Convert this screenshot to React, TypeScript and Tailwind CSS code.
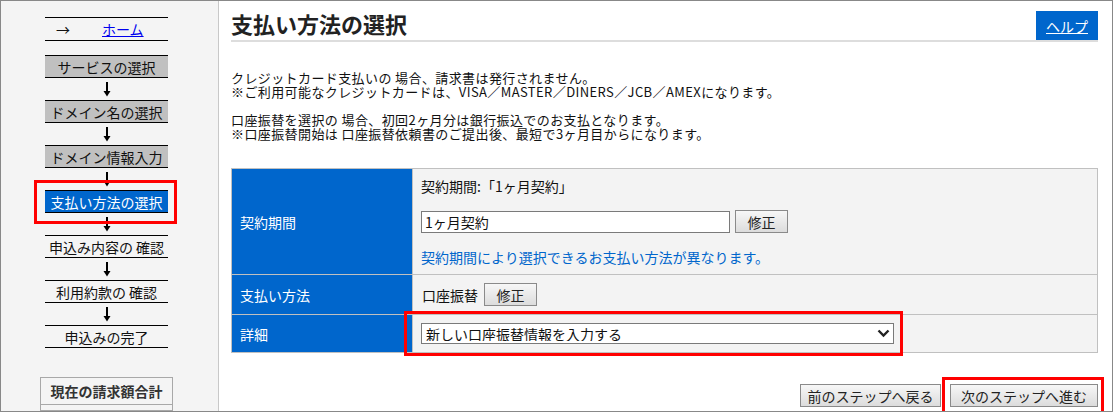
import type { ReactNode } from "react";

type Kind = "done" | "current" | "todo";

const pasos: { label: string; kind: Kind }[] = [
  { label: "サービスの選択", kind: "done" },
  { label: "ドメイン名の選択", kind: "done" },
  { label: "ドメイン情報入力", kind: "done" },
  { label: "支払い方法の選択", kind: "current" },
  { label: "申込み内容の 確認", kind: "todo" },
  { label: "利用約款の 確認", kind: "todo" },
  { label: "申込みの完了", kind: "todo" },
];

// red annotation frame drawn over an element
function Marca({ className }: { className: string }) {
  return (
    <span
      className={`pointer-events-none absolute border-[3px] border-[#ff0000] ${className}`}
    />
  );
}

function Flecha() {
  return (
    <div className="flex h-[22px] items-center justify-center">
      <svg width="8" height="15" viewBox="0 0 8 15">
        <path d="M4 0V10" stroke="#000" strokeWidth="2" />
        <path d="M0.5 9H7.5L4 14.5Z" fill="#000" />
      </svg>
    </div>
  );
}

function Paso({ label, kind }: { label: string; kind: Kind }) {
  const color =
    kind === "done"
      ? "bg-[#c0c0c0] text-[#111]"
      : kind === "current"
        ? "bg-[#0066cc] text-white"
        : "text-[#111]";
  const caja = (
    <div
      className={`flex h-[23px] items-center justify-center border-y border-black text-[14px] leading-none ${color}`}
    >
      {label}
    </div>
  );
  if (kind !== "current") return caja;
  return (
    <div className="relative">
      {caja}
      <Marca className="-top-[10px] -bottom-[11px] -left-[11px] -right-[9px]" />
    </div>
  );
}

function Boton({ children, className = "" }: { children: ReactNode; className?: string }) {
  return (
    <button
      type="button"
      className={`flex h-[23px] items-center justify-center border border-[#8a8a8a] bg-gradient-to-b from-[#f7f7f7] to-[#dcdcdc] text-[14px] leading-none text-[#222] ${className}`}
    >
      {children}
    </button>
  );
}

function Sidebar() {
  return (
    <aside className="flex w-[218px] shrink-0 flex-col border-r border-[#c8c8c8] bg-[#f4f4f4]">
      <div className="ml-[44px] mt-[16px] w-[123px]">
        <div className="flex h-[24px] items-center border-y border-black text-[14px] leading-none">
          <span className="w-[57px] pl-[11px] text-[#111]">→</span>
          <a href="#" className="text-[#0000ee] underline">
            ホーム
          </a>
        </div>
        <div className="mt-[14px]">
          {pasos.map((p, i) => (
            <div key={p.label}>
              {i > 0 && <Flecha />}
              <Paso label={p.label} kind={p.kind} />
            </div>
          ))}
        </div>
      </div>
      <div className="ml-[39px] mt-[29px] h-[60px] w-[133px] border border-[#a8a8a8]">
        <div className="flex h-[27px] items-center justify-center border-b border-[#a8a8a8] text-[14px] font-bold leading-none text-[#333]">
          現在の請求額合計
        </div>
      </div>
    </aside>
  );
}

export default function App() {
  return (
    <div className="flex h-[412px] w-[1113px] overflow-hidden border border-[#888] bg-white font-['Noto_Sans_CJK_JP','Noto_Sans',sans-serif] text-[#111]">
      <Sidebar />
      <main className="flex-1 pl-[12px] pr-[14px] pt-[10px]">
        <div className="flex items-end justify-between border-b-2 border-[#dddddd]">
          <h1 className="pb-[6px] text-[22px] font-bold leading-none text-[#222]">
            支払い方法の選択
          </h1>
          <a
            href="#"
            className="flex h-[29px] w-[62px] items-center justify-center bg-[#0066cc] text-[14px] leading-none text-white underline"
          >
            ヘルプ
          </a>
        </div>

        <p className="mt-[29px] text-[13px] leading-[14px] tracking-[0.4px] text-[#111]">
          クレジットカード支払いの 場合、請求書は発行されません。
          <br />
          ※ご利用可能なクレジットカードは、VISA／MASTER／DINERS／JCB／AMEXになります。
          <br />
          <br />
          口座振替を選択の 場合、初回2ヶ月分は銀行振込でのお支払となります。
          <br />
          ※口座振替開始は 口座振替依頼書のご提出後、最短で3ヶ月目からになります。
        </p>

        <table className="mt-[27px] w-full border-collapse text-[14px] leading-none">
          <tbody>
            <tr className="h-[106px]">
              <th className="w-[181px] border border-[#c0c0c0] bg-[#0066cc] pl-[8px] text-left font-normal text-white">
                契約期間
              </th>
              <td className="border border-[#c0c0c0] bg-[#f3f3f3] pl-[8px] pt-[9px] pb-[8px] align-top">
                <div className="leading-[16px]">契約期間:「1ヶ月契約」</div>
                <div className="mt-[16px] flex items-center gap-[5px]">
                  <input
                    readOnly
                    defaultValue="1ヶ月契約"
                    className="h-[22px] w-[309px] border border-[#7a7a7a] bg-white px-[3px] text-[14px] outline-none"
                  />
                  <Boton className="w-[53px]">修正</Boton>
                </div>
                <div className="mt-[16px] leading-[16px] text-[#0066cc]">
                  契約期間により選択できるお支払い方法が異なります。
                </div>
              </td>
            </tr>
            <tr className="h-[40px]">
              <th className="border border-[#c0c0c0] bg-[#0066cc] pl-[8px] text-left font-normal text-white">
                支払い方法
              </th>
              <td className="border border-[#c0c0c0] bg-[#f3f3f3] pl-[9px]">
                <div className="flex items-center gap-[6px]">
                  <span>口座振替</span>
                  <Boton className="w-[53px]">修正</Boton>
                </div>
              </td>
            </tr>
            <tr className="h-[38px]">
              <th className="border border-[#c0c0c0] bg-[#0066cc] pl-[8px] text-left font-normal text-white">
                詳細
              </th>
              <td className="border border-[#c0c0c0] bg-[#f3f3f3] pl-[8px]">
                <div className="relative w-[473px]">
                  <select className="h-[21px] w-full appearance-none border border-[#7a7a7a] bg-white pl-[4px] text-[14px] leading-none outline-none">
                    <option>新しい口座振替情報を入力する</option>
                  </select>
                  <svg
                    className="pointer-events-none absolute right-[4px] top-[6px]"
                    width="13"
                    height="9"
                    viewBox="0 0 13 9"
                  >
                    <path d="M1.5 1.5L6.5 6.5L11.5 1.5" fill="none" stroke="#222" strokeWidth="2.4" />
                  </svg>
                  <Marca className="-top-[12px] -bottom-[12px] -left-[17px] -right-[9px]" />
                </div>
              </td>
            </tr>
          </tbody>
        </table>

        <div className="mt-[31px] flex justify-end gap-[9px]">
          <Boton className="w-[141px]">前のステップへ戻る</Boton>
          <div className="relative">
            <Boton className="w-[148px]">次のステップへ進む</Boton>
            <Marca className="-top-[7px] -bottom-[8px] -left-[8px] -right-[6px]" />
          </div>
        </div>
      </main>
    </div>
  );
}
